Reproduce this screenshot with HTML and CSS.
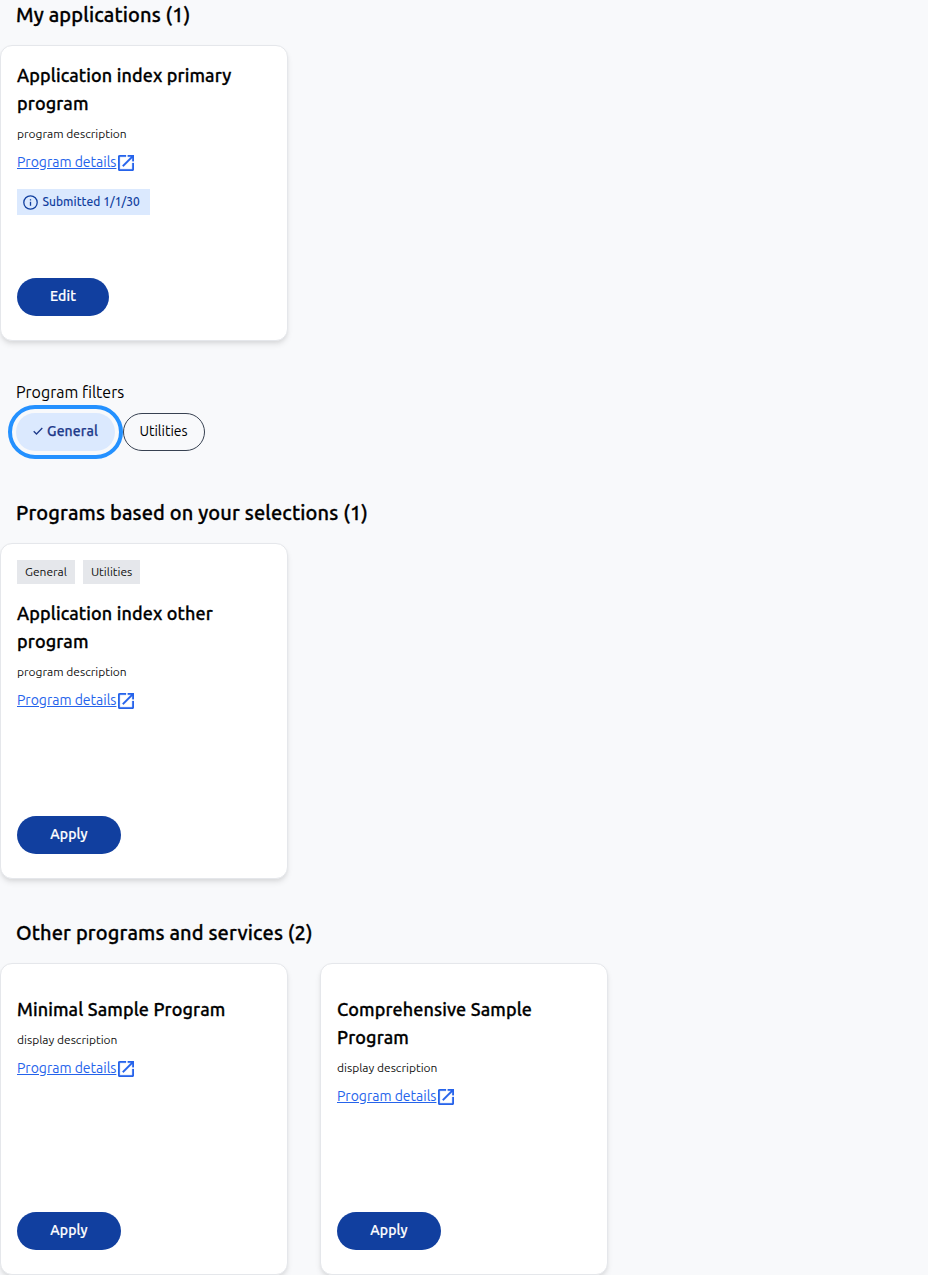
FILE: index.html
```html
<!DOCTYPE html>
<html lang="en">
<head>
<meta charset="utf-8">
<title>Programs</title>
<link rel="stylesheet" href="styles.css">
</head>
<body>
<svg class="defs" aria-hidden="true">
  <symbol id="open" viewBox="0 0 18 18"><path d="M16 16H2V2h7V0H2C.9 0 0 .9 0 2v14c0 1.100.9 2 2 2h14c1.100 0 2-.9 2-2V9h-2v7zM11 0v2h3.590l-9.830 9.830 1.410 1.410L16 3.410V7h2V0h-7z"/></symbol>
</svg>
<main>
  <section class="group group-mine">
    <h2 class="heading">My applications (1)</h2>
    <div class="cards">
      <article class="card">
        <h3 class="title">Application index primary program</h3>
        <p class="desc">program description</p>
        <a class="details" href="#"><span>Program details</span><svg class="open-icon"><use href="#open"/></svg></a>
        <p class="status"><svg class="info-icon" viewBox="0 0 17 17"><circle cx="8.500" cy="8.500" r="6.700"/><path d="M8.500 7.800v4M8.500 5.200v1.400"/></svg><span>Submitted 1/1/30</span></p>
        <a class="button button-edit" href="#">Edit</a>
      </article>
    </div>
  </section>
  <fieldset class="filters">
    <legend class="filters-label">Program filters</legend>
    <div class="chips">
      <button class="chip chip-on"><svg class="check" viewBox="0 0 10 8"><path d="M.7 4.200 3.500 7 9.300 1"/></svg><span>General</span></button>
      <button class="chip chip-off">Utilities</button>
    </div>
  </fieldset>
  <section class="group group-selected">
    <h2 class="heading">Programs based on your selections (1)</h2>
    <div class="cards">
      <article class="card">
        <ul class="tags"><li class="tag">General</li><li class="tag">Utilities</li></ul>
        <h3 class="title">Application index other program</h3>
        <p class="desc">program description</p>
        <a class="details" href="#"><span>Program details</span><svg class="open-icon"><use href="#open"/></svg></a>
        <a class="button" href="#">Apply</a>
      </article>
    </div>
  </section>
  <section class="group group-other">
    <h2 class="heading">Other programs and services (2)</h2>
    <div class="cards">
      <article class="card">
        <h3 class="title">Minimal Sample Program</h3>
        <p class="desc">display description</p>
        <a class="details" href="#"><span>Program details</span><svg class="open-icon"><use href="#open"/></svg></a>
        <a class="button" href="#">Apply</a>
      </article>
      <article class="card">
        <h3 class="title">Comprehensive Sample Program</h3>
        <p class="desc">display description</p>
        <a class="details" href="#"><span>Program details</span><svg class="open-icon"><use href="#open"/></svg></a>
        <a class="button" href="#">Apply</a>
      </article>
    </div>
  </section>
</main>
</body>
</html>
```
FILE: styles.css
```css
* { box-sizing: border-box; margin: 0; padding: 0; }
body {
  background: #f8f9fb;
  color: #000;
  font-family: Ubuntu, "Open Sans", "Noto Sans", sans-serif;
  overflow: hidden;
}
.defs { display: none; }
.heading {
  padding-left: 16px;
  font-size: 20px;
  font-weight: 500;
  line-height: 28px;
  letter-spacing: .13px;
}
.heading, .title { -webkit-text-stroke: .3px #000; }
.group-mine .heading { margin-bottom: 16px; padding-top: 1px; }
.group-selected { margin-top: 48px; }
.group-selected .heading, .group-other .heading { margin-bottom: 16px; }
.group-other { margin-top: 40px; }
.cards { display: flex; gap: 32px; }
.card {
  display: flex;
  flex-direction: column;
  align-items: flex-start;
  width: 288px;
  padding: 15px 16px 24px;
  background: #fff;
  border: 1px solid #e5e7eb;
  border-radius: 12px;
  box-shadow: 0 4px 6px -1px rgba(0,0,0,.1), 0 2px 4px -1px rgba(0,0,0,.06);
}
.group-mine .card { height: 296px; }
.group-selected .card { height: 336px; padding-top: 16px; }
.group-other .card { height: 312px; padding-top: 31px; }
.title { font-size: 18px; font-weight: 500; line-height: 28px; letter-spacing: .12px; }
.desc { margin-top: 9px; font-size: 12px; line-height: 16px; color: #111; }
.details {
  display: flex;
  align-items: center;
  gap: 2px;
  margin-top: 10px;
  font-size: 14px;
  line-height: 20px;
  color: #2563eb;
}
.details span { width: 99px; white-space: nowrap; }
.open-icon {
  width: 16px;
  height: 16px;
  margin-top: 2px;
  fill: #2563eb;
  stroke: #2563eb;
  stroke-width: .3;
}
.status {
  display: flex;
  align-items: center;
  gap: 3.500px;
  width: 133px;
  height: 26px;
  margin-top: 17px;
  padding-left: 5px;
  background: #dbe9fe;
  color: #113f9f;
  font-size: 12px;
  font-weight: 500;
  line-height: 16px;
  letter-spacing: .03px;
  white-space: nowrap;
}
.info-icon { width: 17px; height: 17px; fill: none; stroke: #113f9f; stroke-width: 1.300; }
.button {
  width: 104px;
  height: 38px;
  margin-top: auto;
  border-radius: 19px;
  background: #113f9f;
  color: #fff;
  font-size: 14px;
  font-weight: 500;
  line-height: 36px;
  letter-spacing: .13px;
  text-align: center;
  text-decoration: none;
  -webkit-text-stroke: .2px #fff;
}
.button-edit { width: 92px; }
.filters { border: 0; margin-top: 39px; padding-left: 16px; }
.filters-label { font-size: 16px; line-height: 24px; }
.chips { display: flex; gap: 8px; margin-top: 9px; }
.chip {
  display: flex;
  align-items: center;
  justify-content: center;
  height: 38px;
  padding-bottom: 2px;
  border-radius: 19px;
  font-family: inherit;
  font-size: 14px;
}
.chip-on {
  gap: 4px;
  width: 99px;
  border: 0;
  background: #dbe9fe;
  color: #1e3a8a;
  font-weight: 500;
  letter-spacing: .13px;
  -webkit-text-stroke: .25px #1e3a8a;
  outline: 4px solid #2491ff;
  outline-offset: 4px;
}
.chip-off { width: 82px; border: 1px solid #374151; background: transparent; color: #000; padding-right: 1px; }
.check { width: 10px; height: 8px; fill: none; stroke: #1e3a8a; stroke-width: 1.300; }
.tags { display: flex; gap: 8px; margin-bottom: 15px; list-style: none; }
.tag {
  height: 24px;
  padding: 0 8px;
  background: #e5e7eb;
  color: #111;
  font-size: 12px;
  line-height: 24px;
}
```
